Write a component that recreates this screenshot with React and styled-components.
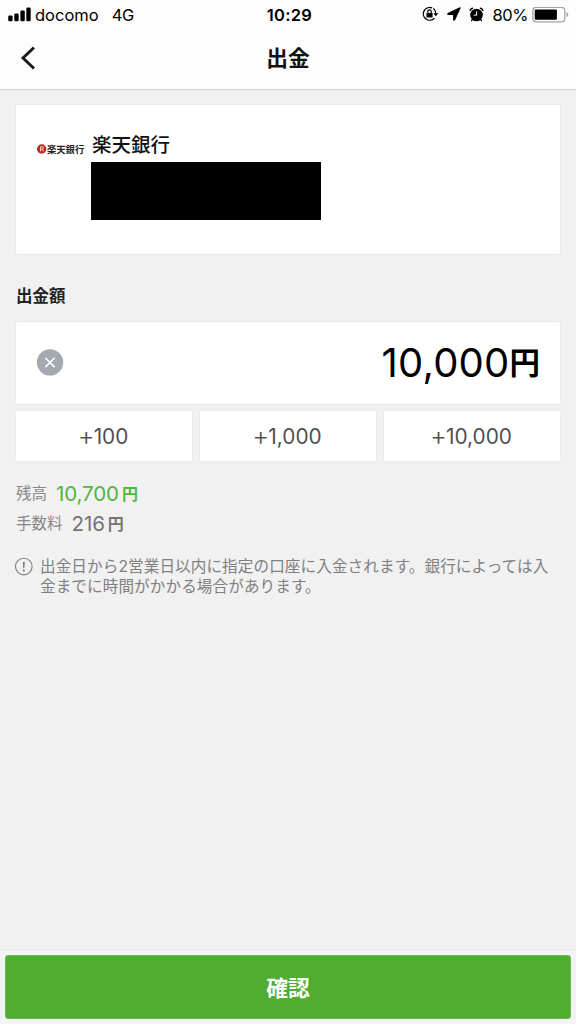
import styled, { createGlobalStyle } from "styled-components";

const GlobalStyle = createGlobalStyle`
  * {
    box-sizing: border-box;
  }
  body {
    margin: 0;
    background-color: #f1f1f1;
    font-family: Inter, "Noto Sans CJK JP", sans-serif;
  }
  button {
    font-family: inherit;
    padding: 0;
    cursor: pointer;
  }
`;

const Screen = styled.div`
  display: flex;
  flex-direction: column;
  width: 576px;
  height: 1024px;
  background-color: #f1f1f1;
`;

const Header = styled.header`
  height: 90px;
  background-color: #fdfdfd;
  border-bottom: 1px solid #d2d2d2;
`;

const StatusBar = styled.div`
  display: grid;
  grid-template-columns: 1fr auto 1fr;
  align-items: center;
  height: 29px;
  padding: 0 7px 0 8px;
  color: #000;
`;

const StatusGroup = styled.div`
  display: flex;
  align-items: center;
  justify-content: ${(props) => (props.$end ? "flex-end" : "flex-start")};
`;

const StatusIcons = styled.div`
  display: flex;
  align-items: center;
  gap: 8px;
  margin-bottom: 1px;
`;

const StatusText = styled.span`
  font-size: 16.5px;
  line-height: 20px;
  font-weight: ${(props) => props.$weight || 400};
  letter-spacing: ${(props) => props.$spacing || "0"};
  margin-left: ${(props) => props.$left || "0"};
  margin-right: ${(props) => props.$right || "0"};
`;

const NavBar = styled.div`
  display: grid;
  grid-template-columns: 60px 1fr 60px;
  align-items: center;
  height: 58px;
`;

const BackButton = styled.button`
  display: flex;
  border: 0;
  background: none;
  padding-left: 20px;
`;

const Title = styled.h1`
  margin: 0;
  text-align: center;
  font-size: 21.8px;
  line-height: 30px;
  font-weight: 700;
  color: #111;
`;

const Main = styled.main`
  flex: 1;
  padding: 14px 15px 0;
`;

const Card = styled.section`
  display: flex;
  background-color: #fff;
  border: 1px solid #e9e9e9;
  border-radius: 3px;
`;

const BankCard = styled(Card)`
  height: 151px;
  padding: 25px 21px 0;
`;

const BankLogo = styled.div`
  display: flex;
  align-items: center;
  width: 54px;
  height: 38px;
  font-size: 9.3px;
  font-weight: 700;
  color: #222;
  white-space: nowrap;
`;

const BankName = styled.div`
  padding-left: 1px;
  font-size: 19.5px;
  line-height: 30px;
  font-weight: 500;
  color: #111;
`;

const AccountMask = styled.div`
  width: 230px;
  height: 58px;
  margin-top: 2px;
  background-color: #000;
`;

const SectionLabel = styled.h2`
  margin: 29px 0 13px 1px;
  font-size: 16.5px;
  line-height: 24px;
  font-weight: 700;
  color: #222;
`;

const AmountCard = styled(Card)`
  align-items: center;
  justify-content: space-between;
  height: 84px;
  padding: 0 20px 0 21px;
`;

const ClearButton = styled.button`
  display: flex;
  border: 0;
  background: none;
  margin-bottom: 2px;
`;

const Amount = styled.div`
  display: flex;
  align-items: center;
  font-size: 40px;
  line-height: 48px;
  letter-spacing: 0.2px;
  color: #000;
`;

const AmountYen = styled.span`
  padding-bottom: 3px;
  font-family: "Noto Sans CJK JP", sans-serif;
  font-size: 30.5px;
  line-height: 45px;
  font-weight: 700;
  letter-spacing: 0;
`;

const Yen = styled.span`
  padding-bottom: 2px;
  font-family: "Noto Sans CJK JP", sans-serif;
  font-size: 16px;
  font-weight: 700;
  letter-spacing: 0;
  line-height: 28px;
  margin-left: 3px;
`;

const Presets = styled.div`
  display: grid;
  grid-template-columns: repeat(3, 1fr);
  gap: 6px;
  margin-top: 5px;
`;

const PresetButton = styled.button`
  display: flex;
  align-items: center;
  justify-content: center;
  height: 52px;
  padding-right: 2px;
  background-color: #fff;
  border: 1px solid #ebebeb;
  border-radius: 3px;
  font-size: 20.8px;
  color: #505050;
`;

const PlusSign = styled.span`
  font-size: 26px;
  line-height: 26px;
  font-weight: 300;
  letter-spacing: -1px;
`;

const Details = styled.div`
  margin: 17px 0 0 1px;
`;

const DetailRow = styled.div`
  display: flex;
  align-items: center;
  height: 30px;
  line-height: 30px;
`;

const DetailLabel = styled.span`
  font-size: 15.5px;
  color: #888;
`;

const DetailValue = styled.span`
  display: flex;
  align-items: center;
  margin-left: 9px;
  font-size: 20.5px;
  letter-spacing: -0.1px;
  color: ${(props) => (props.$green ? "#4fb83c" : "#747474")};
`;

const Note = styled.div`
  display: flex;
  margin-top: 18px;
`;

const NoteText = styled.p`
  margin: 0 0 0 7px;
  font-size: 15.6px;
  line-height: 20px;
  letter-spacing: 0.09px;
  color: #808080;
  white-space: nowrap;
`;

const Footer = styled.footer`
  height: 75px;
  padding: 5px 5px 0;
  border-top: 1px solid #e9e9e9;
  background-color: #f3f3f3;
`;

const ConfirmButton = styled.button`
  width: 100%;
  height: 64px;
  padding-bottom: 2px;
  border: 1px solid #68bb4b;
  border-radius: 3px;
  background-color: #50ad32;
  color: #fff;
  font-size: 21.8px;
  font-weight: 700;
`;

const SignalIcon = () => (
  <svg width="24" height="16" viewBox="0 0 24 16">
    <rect x="0.2" y="8.4" width="4.4" height="5.9" rx="1.3" />
    <rect x="6.3" y="6.4" width="4.4" height="7.9" rx="1.3" />
    <rect x="12.4" y="3.5" width="4.4" height="10.8" rx="1.3" />
    <rect x="18.3" y="0.6" width="4.4" height="13.7" rx="1.3" />
  </svg>
);

const RotationLockIcon = () => (
  <svg width="17" height="16" viewBox="0 0 17 16" fill="none" stroke="#000">
    <path d="M12.4 12.2A6.4 6.4 0 1 1 10.2 1.9" strokeWidth="1.3" />
    <path d="M11.4 2.6A6.4 6.4 0 0 1 13.8 7.6" strokeWidth="1.3" />
    <path d="M11.2 7.2h5.2l-2.6 3z" fill="#000" stroke="none" />
    <rect x="4.4" y="7" width="6.2" height="4.6" rx="0.6" fill="#000" stroke="none" />
    <path d="M5.8 7.3V5.6a1.7 1.7 0 0 1 3.4 0v1.7" strokeWidth="1.2" />
  </svg>
);

const LocationIcon = () => (
  <svg width="14" height="14" viewBox="0 0 14 14">
    <path
      d="M13 0.9 1 6.6q-.4.7.4.8h4.7q.6 0 .6.6v4.7q.3.8.8.2z"
      stroke="#000"
      strokeWidth="1.2"
      strokeLinejoin="round"
    />
  </svg>
);

const AlarmIcon = () => (
  <svg width="15" height="15" viewBox="0 0 15 15">
    <circle cx="7.5" cy="8" r="6.3" />
    <path d="M3.6 12 2.6 13.6M11.4 12 12.4 13.6" stroke="#000" strokeWidth="1.4" strokeLinecap="round" />
    <path d="M1.1 3.3Q2 1.6 3.5 1.2M13.9 3.3Q13 1.6 11.5 1.2" stroke="#000" strokeWidth="1.4" fill="none" strokeLinecap="round" />
    <path d="M7.6 4.4v3.8H4.8" stroke="#fff" strokeWidth="1" fill="none" />
  </svg>
);

const BatteryIcon = () => (
  <svg width="37" height="16" viewBox="0 0 37 16">
    <rect x="0.8" y="0.4" width="32" height="14.4" rx="3.4" fill="#fff" stroke="#a5a5a5" strokeWidth="1.3" />
    <rect x="2.7" y="2.5" width="22.2" height="10.3" rx="1" />
    <path d="M34.5 5q1.8.8 1.8 2.6t-1.8 2.6z" fill="#a5a5a5" />
  </svg>
);

const BackIcon = () => (
  <svg width="16" height="24" viewBox="0 0 16 24" fill="none" stroke="#1a1a1a" strokeWidth="2.9">
    <path d="M14 1.5 3 12l11 10.5" />
  </svg>
);

const RakutenMark = () => (
  <svg width="10" height="10" viewBox="0 0 10 10">
    <circle cx="4.7" cy="5" r="4.7" fill="#bf2a22" />
    <path d="M3.6 7.4V2.7h1.6q1.3 0 1.3 1.2T5.2 5.2H3.6M5 5.2l1.8 2.2" fill="none" stroke="#f6d5d5" strokeWidth="1" />
  </svg>
);

const ClearIcon = () => (
  <svg width="27" height="27" viewBox="0 0 27 27">
    <circle cx="13" cy="13.4" r="13.2" fill="#a4a8b1" />
    <path d="m8.3 8.7 9.4 9.4m0-9.4-9.4 9.4" stroke="#fff" strokeWidth="1.5" />
  </svg>
);

const AlertIcon = () => (
  <svg width="18" height="20" viewBox="0 0 18 20">
    <circle cx="8.8" cy="9.6" r="8.3" fill="none" stroke="#808080" strokeWidth="1.1" />
    <path d="M7.8 4.9h2l-.5 6.3h-1z" fill="#777" />
    <circle cx="8.8" cy="13.5" r="1.1" fill="#777" />
  </svg>
);

const presets = ["100", "1,000", "10,000"];

const App = () => {
  return (
    <>
      <GlobalStyle />
      <Screen>
        <Header>
          <StatusBar>
            <StatusGroup>
              <SignalIcon />
              <StatusText $left="3px">docomo</StatusText>
              <StatusText $left="13px" $spacing="-0.3px">4G</StatusText>
            </StatusGroup>
            <StatusText $weight={600} $spacing="0.3px" $left="2px">10:29</StatusText>
            <StatusGroup $end>
              <StatusIcons>
                <RotationLockIcon />
                <LocationIcon />
                <AlarmIcon />
              </StatusIcons>
              <StatusText $left="8px" $right="4px" $spacing="-0.4px">80%</StatusText>
              <BatteryIcon />
            </StatusGroup>
          </StatusBar>
          <NavBar>
            <BackButton aria-label="戻る">
              <BackIcon />
            </BackButton>
            <Title>出金</Title>
          </NavBar>
        </Header>

        <Main>
          <BankCard>
            <BankLogo>
              <RakutenMark />
              楽天銀行
            </BankLogo>
            <div>
              <BankName>楽天銀行</BankName>
              <AccountMask />
            </div>
          </BankCard>

          <SectionLabel>出金額</SectionLabel>
          <AmountCard>
            <ClearButton aria-label="クリア">
              <ClearIcon />
            </ClearButton>
            <Amount>
              10,000<AmountYen>円</AmountYen>
            </Amount>
          </AmountCard>
          <Presets>
            {presets.map((value) => (
              <PresetButton key={value}>
                <PlusSign>+</PlusSign>
                {value}
              </PresetButton>
            ))}
          </Presets>

          <Details>
            <DetailRow>
              <DetailLabel>残高</DetailLabel>
              <DetailValue $green>
                10,700<Yen>円</Yen>
              </DetailValue>
            </DetailRow>
            <DetailRow>
              <DetailLabel>手数料</DetailLabel>
              <DetailValue>
                216<Yen>円</Yen>
              </DetailValue>
            </DetailRow>
          </Details>

          <Note>
            <AlertIcon />
            <NoteText>
              出金日から2営業日以内に指定の口座に入金されます。銀行によっては入
              <br />
              金までに時間がかかる場合があります。
            </NoteText>
          </Note>
        </Main>

        <Footer>
          <ConfirmButton>確認</ConfirmButton>
        </Footer>
      </Screen>
    </>
  );
};

export default App;
